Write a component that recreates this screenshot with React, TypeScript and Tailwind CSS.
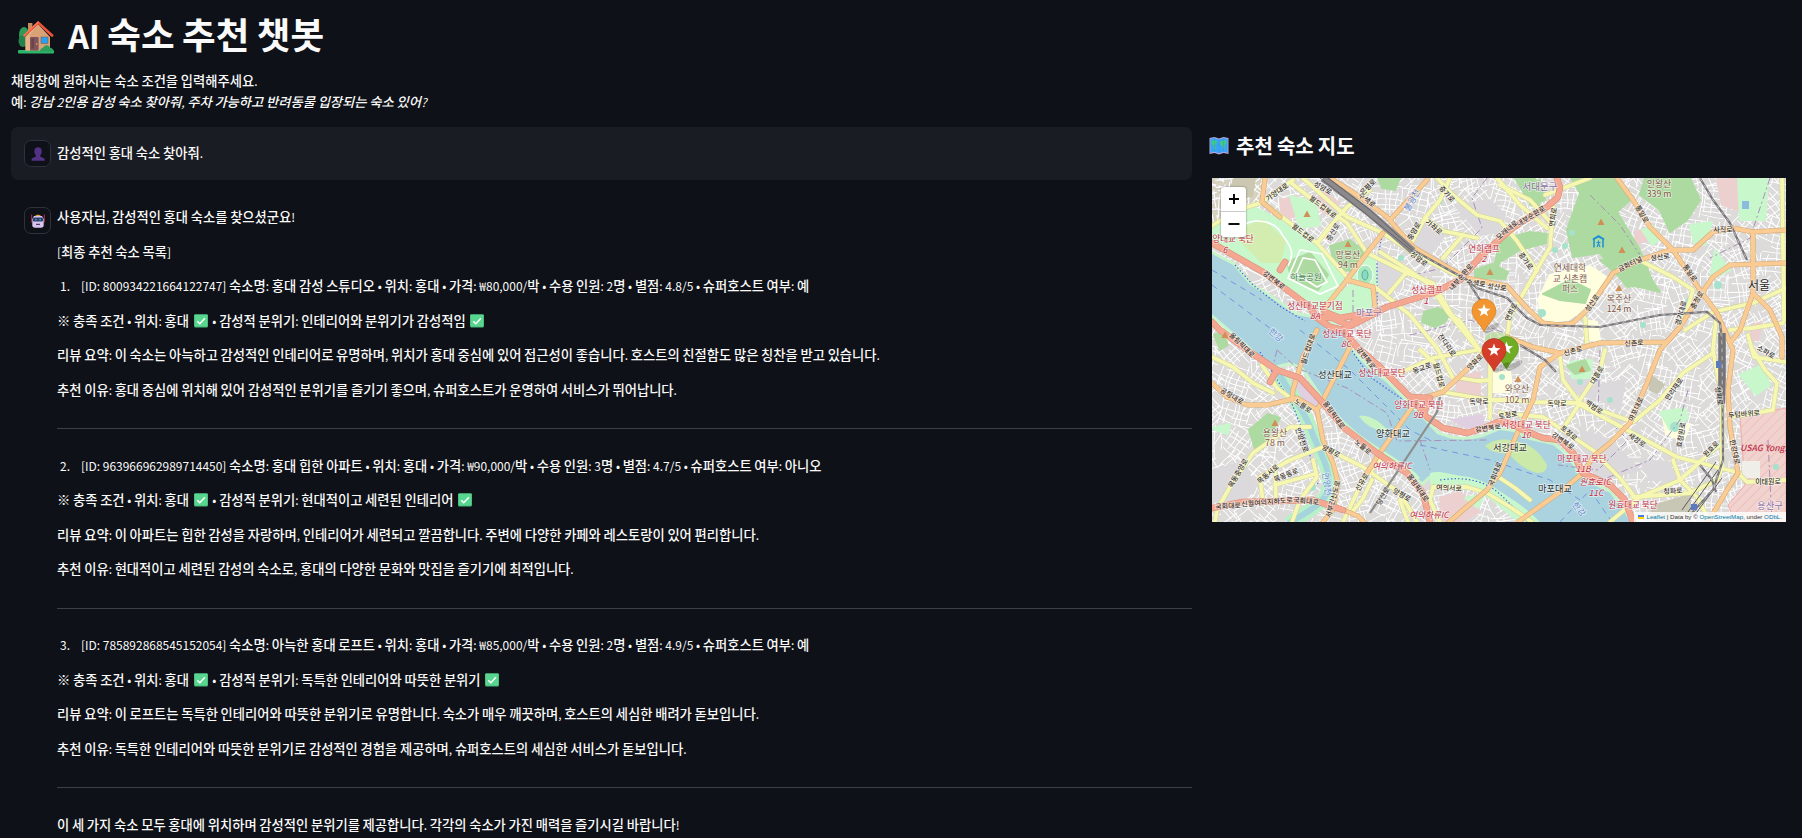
import React from "react";

const FONT = "font-['Noto_Sans_CJK_KR','Noto_Sans',sans-serif]";

/* Latin glyphs, digits and spaces are set a little smaller and lighter than Hangul. */
function T({ children, heading }: { children: string; heading?: boolean }) {
  const parts = children.split(/([\u3131-\uD79D※]+)/).filter(Boolean);
  return (
    <>
      {parts.map((p, i) =>
        /[\u3131-\uD79D※]/.test(p) ? (
          p
        ) : (
          <span key={i} className={heading ? "text-[0.896em]" : "text-[0.9em] font-normal"}>
            {p.split(/(✅)/).map((q, j) => (q === "✅" ? <Check key={j} /> : q))}
          </span>
        ),
      )}
    </>
  );
}

function Check() {
  return (
    <svg viewBox="0 0 14 14" className="mx-[2px] inline-block size-[14px] align-[-2px]" aria-hidden="true">
      <rect x="0.3" y="0.4" width="13.4" height="13.2" rx="0.8" fill="#43b877" />
      <rect x="0.3" y="0.4" width="13.4" height="12.2" rx="0.8" fill="#58d68f" />
      <path d="M3.2 7.2 5.8 9.7 10.9 4.2" fill="none" stroke="#fff" strokeWidth="1.5" />
    </svg>
  );
}

function House() {
  return (
    <svg viewBox="0 0 36 33" className="h-[33px] w-9" aria-hidden="true">
      <ellipse cx="6" cy="14" rx="5" ry="8" fill="#2f9a5a" />
      <ellipse cx="5" cy="20" rx="4.5" ry="6" fill="#25824c" />
      <rect x="0" y="29" width="36" height="3.4" rx="1" fill="#2cb56b" />
      <rect x="10" y="2" width="4.4" height="10" fill="#c78b62" />
      <path d="M20 3 7.500 16v13.5H32V16z" fill="#d9a276" />
      <path d="M20 3 7.500 16v13.5h4.500V14z" fill="#e7b287" />
      <path d="M20.300 0 5 14.400l1.500 1.700L20.300 3.300l13.700 13 1.800-2z" fill="#f0533a" />
      <path d="M20.300 0 5 14.400l.8.900L20.300 1.800z" fill="#ff7d55" />
      <rect x="12" y="16" width="8.6" height="13.5" rx="1" fill="#80545a" />
      <rect x="13.4" y="17.5" width="2.6" height="10" fill="#6d444c" />
      <circle cx="18.8" cy="23" r="0.8" fill="#f3c14f" />
      <rect x="23" y="16" width="7" height="6.6" fill="#2b9df2" stroke="#77593f" strokeWidth="0.5" />
      <path d="M22 30.500c0-3.500 3-3.500 3.600-4.500 2-3 6-1.500 6.400.8 2.500 0 3.500 2.200 3.500 3.700z" fill="#2f9d5b" />
    </svg>
  );
}

function MapEmoji() {
  return (
    <svg viewBox="0 0 20 18" className="h-[18px] w-5" aria-hidden="true">
      <path d="M0.500 1 5.500 0 10 1.500 14.500 0 19.500 1v16l-5-1-4.500 1.500L5.500 16l-5 1z" fill="#b9a6dc" />
      <path d="M1.300 1.700 5.500 1 10 2.400 14.500 1l4.200.700v14l-4.200-1L10 16.200 5.500 14.700l-4.200 1z" fill="#39a4f5" />
      <path d="M2.500 4c2-1.500 4-1.500 5.500.5L7 7.500 5.500 8l1.500 3-1.500 2.500L4.500 9l-2-2z" fill="#41c98a" />
      <path d="M11 5c1.500-2 4.500-2 6.500-1.500v3l-2 1.500.5 3-1.500 1.500-1-3.500-2.500-1z" fill="#41c98a" />
      <path d="M5.500 1v13.700M10 2.400v13.800M14.500 1v13.700" stroke="#2b70bd" strokeOpacity="0.200" />
    </svg>
  );
}

function UserIcon() {
  return (
    <svg viewBox="0 0 14 14" className="size-[14px]" aria-hidden="true">
      <path d="M7 0.300c2.500 0 3.700 1.600 3.700 4 0 2-.7 3.300-1.500 4.200v1l3.800 1.700c.6.4.7 1.200.7 2.500H.5c0-1.300.1-2.100.7-2.500L5 9.500v-1C4.100 7.600 3.400 6.300 3.400 4.300c0-2.400 1.200-4 3.600-4z" fill="#533285" />
    </svg>
  );
}

function RobotIcon() {
  return (
    <svg viewBox="0 0 14 14" className="size-[14px]" aria-hidden="true">
      <path d="M0.700 0.500v8M13.300 0.500v8" stroke="#c9355c" strokeWidth="0.900" />
      <path d="M4 2.500C4 .2 10 .2 10 2.500z" fill="#e0a030" />
      <path d="M3 2h8L12.700 5v6.200c0 1.600-1 2.500-2.700 2.500H4c-1.700 0-2.700-.9-2.700-2.500V5z" fill="#d9c3ee" />
      <rect x="2" y="3.600" width="10" height="4" rx="1.300" fill="#2a3f66" />
      <circle cx="4.900" cy="5.600" r="0.900" fill="#3d9bd8" />
      <circle cx="9.100" cy="5.600" r="0.900" fill="#3d9bd8" />
      <rect x="5" y="9.700" width="4" height="1.200" rx="0.400" fill="#4a3c60" />
    </svg>
  );
}

function Avatar({ children }: { children: React.ReactNode }) {
  return (
    <div className="flex size-[27px] shrink-0 items-center justify-center rounded-[7px] border border-[#30323b] bg-[#0e1117]">
      {children}
    </div>
  );
}

/* ------------------------------- map ------------------------------- */

/* Irregular street grids for the residential blocks. */
function streets(): string {
  let s = 91;
  const rnd = () => ((s = (s * 16807) % 2147483647) / 2147483647);
  let d = "";
  for (let cx = 1205; cx < 1800; cx += 30) {
    for (let cy = 172; cy < 540; cy += 30) {
      const a = (rnd() - 0.5) * 1.7;
      const c = Math.cos(a);
      const n = Math.sin(a);
      for (let dir = 0; dir < 2; dir++) {
        for (let k = -15; k <= 15; k += 4 + rnd() * 4) {
          const l0 = -6 - rnd() * 14;
          const l1 = 6 + rnd() * 14;
          const bend = (rnd() - 0.5) * 5;
          const pt = (u: number, v: number) => {
            const x = dir ? v : u;
            const y = dir ? u : v;
            return `${(cx + x * c - y * n).toFixed(1)} ${(cy + x * n + y * c).toFixed(1)}`;
          };
          d += `M${pt(l0, k)}L${pt(0, k + bend)}L${pt(l1, k + bend / 2)}`;
        }
      }
    }
  }
  return d;
}
const STREETS = streets();

const RIVER =
  "1212,254 1233,265 1250,285 1277,302 1295,315 1320,319 1342,330 1350,350 1367,367 1387,383 1407,403 1424,420 1437,434 1452,439 1467,440 1483,437 1500,430 1513,432 1530,440 1553,445 1568,457 1578,475 1592,484 1610,493 1623,510 1630,522 1537,522 1530,513 1513,503 1490,488 1463,480 1430,475 1422,482 1412,474 1400,463 1373,447 1343,420 1323,397 1303,367 1290,362 1273,366 1257,353 1233,332 1212,314";

const RED = [
  "1212,243 1233,255 1263,272 1283,287 1310,307 1316,317 1330,327 1343,330 1357,347 1380,367 1410,397 1427,417 1443,428 1467,433 1487,427 1500,421 1510,423 1523,430 1543,438 1560,440 1573,453 1583,473 1610,485 1625,500 1633,522",
  "1316,317 1333,318 1350,326 1360,321 1387,307 1433,293 1460,280 1480,257 1510,230 1520,223 1547,207 1558,197 1560,188 1557,178",
  "1212,322 1220,330 1247,350 1277,370 1300,378 1323,403 1343,427 1377,453 1407,473 1423,493 1430,522",
  "1212,508 1243,502 1313,500 1343,510",
  "1280,270 1285,262",
  "1343,330 1352,323 1363,314 1340,318 1325,312",
  "1277,370 1270,382",
  "1410,397 1430,398 1424,412",
];
const ORANGE = [
  "1317,330 1303,357 1293,390 1292,400",
  "1350,347 1323,400 1317,410",
  "1212,383 1227,397 1247,405 1267,405 1297,398 1317,410 1323,440 1333,463 1338,483 1333,510 1323,522",
  "1343,510 1358,516 1366,524",
  "1330,178 1360,197 1387,217 1413,247 1447,267 1467,278 1507,286 1527,308 1543,323 1560,325 1573,323 1590,307 1613,273 1640,260 1670,250 1693,250 1713,232 1733,228 1753,232 1786,230",
  "1265,178 1262,202 1280,217",
  "1617,178 1633,200 1650,227 1673,250 1700,290 1717,313 1730,343 1733,350 1728,390 1730,427 1738,473 1727,490 1707,524",
  "1753,232 1753,293 1740,330 1730,343",
  "1753,293 1770,310 1782,337 1782,357",
  "1786,263 1730,265 1713,277 1697,300 1680,327 1660,350 1647,383 1630,423 1610,443 1593,457 1583,473 1560,492 1518,522",
  "1507,337 1533,347 1560,353 1600,343 1667,342 1680,327",
  "1487,348 1480,357 1463,373 1443,392 1417,400 1377,457 1367,473",
  "1560,353 1540,367 1533,400 1520,427 1500,473 1487,490 1463,510 1447,524",
  "1427,180 1390,220",
  "1383,233 1367,253 1347,280 1323,310",
  "1347,280 1373,287 1375,307",
];
const YELLOW = [
  "1212,226 1235,211 1260,203 1293,180",
  "1262,202 1290,223 1317,243 1347,277",
  "1290,182 1313,200 1347,223 1367,253 1407,273 1433,283 1453,317 1460,321 1483,355",
  "1303,178 1347,217 1383,233 1413,253 1460,277",
  "1317,243 1333,223 1347,207 1370,190",
  "1437,178 1453,195 1477,215 1500,221 1517,241 1537,271",
  "1497,178 1520,205 1547,228",
  "1553,207 1550,247 1527,287 1510,317 1507,337",
  "1380,252 1410,271 1430,285 1447,311 1477,348",
  "1375,287 1410,315 1437,348 1453,378",
  "1425,218 1443,231 1477,238",
  "1463,235 1443,258",
  "1425,218 1412,242",
  "1450,178 1440,200 1425,218",
  "1389,293 1407,272",
  "1400,373 1433,358 1477,350",
  "1420,350 1437,365 1443,392 1490,400 1510,400 1533,402 1577,403 1627,430 1677,457 1740,473",
  "1560,357 1563,380 1580,403 1633,422 1660,400 1683,373 1713,353",
  "1580,400 1600,370 1605,350",
  "1580,403 1570,418 1562,430",
  "1500,413 1543,417 1573,437 1597,453",
  "1490,360 1490,418",
  "1460,378 1478,381 1490,380",
  "1720,445 1713,450 1680,480 1640,497 1610,522",
  "1597,455 1620,478 1633,495",
  "1633,497 1690,493 1717,480 1722,467 1722,400 1713,350 1716,320",
  "1673,460 1680,480 1697,497 1710,522",
  "1730,417 1773,410 1777,383 1765,370 1753,350",
  "1740,475 1747,482 1786,480",
  "1782,178 1784,320",
  "1685,330 1713,312 1753,303 1786,288",
  "1730,330 1752,328 1783,323",
  "1748,335 1754,357 1786,362",
  "1643,262 1673,277 1693,290 1687,310 1678,330",
  "1500,185 1530,200 1553,225",
  "1545,195 1590,178",
  "1212,357 1233,367 1253,383 1273,393",
  "1262,365 1277,388 1297,403",
  "1323,447 1290,460 1260,477 1263,503",
  "1215,522 1217,510 1230,487 1253,453 1290,427 1310,427",
  "1323,447 1363,467 1400,493 1417,522",
  "1380,460 1363,480 1343,522",
  "1372,480 1362,500 1352,512",
  "1313,460 1317,477 1300,500 1292,522",
  "1275,470 1276,500",
  "1275,485 1315,474",
  "1433,487 1467,487 1487,493 1510,507 1532,522",
  "1433,487 1430,500 1440,522",
  "1400,500 1408,522",
  "1585,318 1587,343",
  "1500,478 1515,488 1530,500",
];
const RAIL = [
  "1413,250 1467,280 1477,288 1507,298 1527,318 1540,325 1600,327 1660,315 1707,312 1720,323 1722,345 1723,460 1713,490 1690,515",
  "1700,178 1713,200 1730,223 1747,260",
  "1467,280 1480,300 1487,310",
  "1520,345 1545,360 1556,372",
  "1700,465 1712,480 1716,492",
];
const FOREST = [
  "1571,178 1617,178 1630,200 1617,212 1640,250 1653,283 1627,287 1600,253 1573,257 1567,230 1580,193",
  "1645,178 1690,178 1700,200 1687,220 1670,232 1660,210 1640,195",
  "1600,260 1640,262 1660,292 1652,290 1630,285",
  "1543,294 1570,280 1590,290 1585,303 1560,300",
  "1500,240 1530,232 1547,234 1546,243 1520,250 1500,262 1492,275",
  "1475,270 1492,264 1508,272 1505,279 1475,278",
  "1424,312 1437,308 1450,313 1445,322 1435,327 1422,322",
  "1330,246 1350,240 1367,254 1355,272 1345,270 1334,262",
  "1287,262 1310,253 1328,275 1318,290 1292,280",
  "1249,430 1268,414 1280,418 1268,438 1256,452",
  "1567,366 1585,360 1590,370 1575,374",
  "1526,183 1540,180 1545,200 1530,205",
  "1214,335 1222,332 1228,345 1220,350",
  "1378,178 1400,178 1395,190 1382,188",
  "1515,178 1535,178 1540,210 1528,200",
];
const GRASS = [
  "1212,226 1250,205 1290,225 1317,245 1345,277 1322,310 1300,298 1270,278 1212,240",
  "1290,196 1315,202 1320,225 1300,228",
  "1357,262 1375,255 1377,285 1350,280",
  "1325,308 1350,285 1372,290 1370,308 1345,320",
  "1738,178 1768,178 1765,220 1740,220",
  "1642,230 1653,226 1662,238 1652,245",
  "1660,412 1685,408 1688,418 1670,430",
  "1570,362 1592,360 1590,378 1572,378",
  "1690,225 1712,222 1705,245 1694,243",
  "1715,250 1730,270 1710,280",
  "1212,428 1230,424 1228,434 1216,430",
  "1500,482 1530,505 1545,522 1520,522",
  "1465,498 1485,494 1478,508",
  "1740,375 1762,365 1770,385 1756,395",
];
const SAND = [
  "1550,275 1590,266 1608,278 1590,305 1568,320 1545,322 1538,300",
  "1490,372 1510,372 1512,392 1492,392",
  "1584,320 1597,322 1600,340 1586,340",
  "1663,418 1672,430 1690,424 1684,440 1666,434",
];
const GREY = [
  "1402,240 1420,225 1445,235 1430,255 1445,262 1460,275 1430,262",
  "1378,255 1402,262 1388,300 1378,300",
  "1455,205 1490,200 1505,215 1500,232 1480,235",
  "1600,385 1625,380 1620,410 1600,400",
  "1212,470 1245,462 1255,490 1240,500 1212,502",
  "1560,375 1600,380 1595,400 1575,392",
  "1580,430 1610,440 1640,470 1600,480 1590,468",
  "1640,460 1668,462 1678,480 1650,480",
  "1350,380 1390,392 1400,410 1380,400",
];
const PINK = [
  "1280,200 1298,196 1300,215 1282,220",
  "1325,192 1340,204 1325,214 1312,200",
  "1455,378 1480,372 1480,395 1458,392",
  "1440,498 1460,492 1480,512 1460,522 1442,522",
  "1635,232 1648,228 1648,240 1636,244",
  "1717,180 1738,178 1738,210 1722,205",
  "1752,325 1762,322 1758,340 1750,340",
  "1295,376 1318,400 1300,396 1280,385",
];

/* [text, x, y, rotation] */
type L = [string, number, number, number];
const ROADS: L[] = [
  ["가양대로", 1277, 192, -35], ["월드컵북로", 1323, 207, 38], ["월드컵로", 1303, 233, 38], ["증산로", 1333, 232, -60],
  ["성암로", 1323, 188, 30], ["수색로", 1367, 200, 38], ["은평로", 1368, 187, -45], ["증가로", 1447, 194, 48],
  ["가좌로", 1434, 227, 40], ["중암로", 1414, 231, -60], ["성암로", 1419, 259, 38], ["강변북로", 1274, 280, 38],
  ["내부순환로", 1461, 277, -50], ["내부순환로", 1531, 216, -32], ["모래내로", 1507, 230, -40], ["수색로", 1476, 283, 8],
  ["성산로", 1497, 287, 8], ["연희로", 1553, 217, -82], ["증가로", 1526, 261, 55], ["통일로", 1642, 214, 60],
  ["금화터널", 1630, 264, -25], ["성산로", 1660, 257, -8], ["사직로", 1723, 229, 0], ["통일로", 1690, 273, 55],
  ["성산로", 1592, 303, -55], ["충정로", 1697, 300, -60], ["경기대로", 1681, 313, -75], ["신촌로", 1634, 343, -3],
  ["신촌로", 1573, 351, -15], ["연희로", 1511, 312, -65], ["소파로", 1766, 352, 30],
  ["잔다리로", 1447, 345, 55], ["동교로", 1422, 368, -20], ["월드컵로", 1439, 375, 75], ["양화로", 1475, 362, -45],
  ["독막로", 1479, 401, 0], ["토정로", 1508, 415, -10], ["독막로", 1557, 403, 0], ["백범로", 1594, 407, 35],
  ["대흥로", 1597, 375, -60], ["마포대로", 1636, 409, -65], ["만리재로", 1674, 389, -55], ["새창로", 1637, 440, 35],
  ["효창원로", 1681, 435, -80], ["원효로", 1711, 449, -45], ["두텁바위로", 1744, 414, -5], ["한강대로", 1735, 452, 78],
  ["이태원로", 1768, 481, 0], ["청파로", 1673, 491, -3], ["청파로", 1719, 396, 80], ["토정로", 1569, 433, 40],
  ["강변북로", 1488, 428, -8], ["강변북로", 1563, 441, 35], ["강변북로", 1366, 358, 52], ["올림픽대로", 1242, 345, 45],
  ["월드컵대로", 1308, 349, -72], ["공항대로", 1232, 396, 30], ["올림픽대로", 1334, 415, 55], ["노들로", 1363, 447, 40],
  ["노들로", 1303, 406, 35], ["양평로", 1331, 451, 28], ["안양천로", 1302, 440, 70], ["목동서로", 1268, 474, -40],
  ["목동동로", 1286, 475, -22], ["목동중앙로", 1238, 473, -60], ["국회대로", 1228, 506, -3], ["신월여의지하도로", 1267, 502, -5],
  ["국회대로", 1306, 501, 6], ["서부간선도로", 1333, 499, -75], ["선유로", 1362, 482, -60], ["당산로", 1383, 496, -60],
  ["양평로", 1402, 495, 30], ["올림픽대로", 1418, 488, 55], ["여의서로", 1449, 488, 3], ["국회대로", 1495, 474, -68],
];
const RED_LABELS: L[] = [
  ["양대교 북단", 1233, 239, 0], ["성산대교분기점", 1315, 306, 0], ["성산램프", 1427, 290, 0], ["연희램프", 1484, 249, 0],
  ["성산대교 북단", 1347, 334, 0], ["성산대교북단", 1382, 373, 0], ["양화대교 북단", 1419, 405, 0],
  ["서강대교 북단", 1526, 425, 0], ["마포대교 북단", 1582, 459, 0], ["원효대교 북단", 1633, 505, 0],
];
const RED_NUM: L[] = [
  ["6", 1225, 250, 0], ["8A", 1315, 316, 0], ["1", 1426, 301, 0], ["2", 1484, 259, 0], ["8C", 1346, 344, 0], ["9B", 1418, 415, 0],
  ["10", 1526, 435, 0], ["11B", 1583, 469, 0], ["11C", 1596, 493, 0], ["여의하류IC", 1392, 466, 0], ["여의하류IC", 1429, 515, 0],
  ["원효로IC", 1595, 482, 0],
];
const BROWN: L[] = [
  ["망봉산", 1348, 255, 0], ["94 m", 1348, 265, 0], ["인왕산", 1659, 184, 0], ["339 m", 1659, 194, 0], ["복주산", 1619, 299, 0],
  ["124 m", 1619, 309, 0], ["와우산", 1517, 389, 0], ["102 m", 1517, 400, 0], ["용왕산", 1275, 433, 0], ["78 m", 1275, 443, 0],
  ["연세대학", 1570, 268, 0], ["교 신촌캠", 1570, 279, 0], ["퍼스", 1570, 289, 0],
];
const BRIDGES: L[] = [
  ["성산대교", 1335, 375, 0], ["양화대교", 1393, 434, 0], ["서강대교", 1510, 448, 0], ["마포대교", 1555, 489, 0],
];
const PEAKS = [
  [1307, 214], [1348, 244], [1490, 272], [1601, 222], [1622, 250], [1619, 288], [1518, 379], [1275, 423], [1225, 335], [1582, 369],
];

function Labels({ items, size, fill, extra }: { items: L[]; size: number; fill: string; extra?: string }) {
  return (
    <g fontSize={size} fill={fill} stroke="#fff" strokeOpacity="0.600" strokeWidth="1.500" paintOrder="stroke" textAnchor="middle" className={extra}>
      {items.map(([t, x, y, r], i) => (
        <text key={i} transform={`translate(${x} ${y}) rotate(${r})`} y={size * 0.36}>
          {t}
        </text>
      ))}
    </g>
  );
}

function Lines({ items, color, casing, w }: { items: string[]; color: string; casing: string; w: number }) {
  return (
    <g fill="none" strokeLinejoin="round" strokeLinecap="round">
      {items.map((p, i) => (
        <polyline key={`c${i}`} points={p} stroke={casing} strokeWidth={w + 1.1} />
      ))}
      {items.map((p, i) => (
        <polyline key={i} points={p} stroke={color} strokeWidth={w} />
      ))}
    </g>
  );
}

function Areas({ items, fill, stroke }: { items: string[]; fill: string; stroke?: string }) {
  return (
    <g fill={fill} stroke={stroke ?? fill} strokeWidth="2" strokeLinejoin="round">
      {items.map((p, i) => (
        <polygon key={i} points={p} />
      ))}
    </g>
  );
}

function Pin({ x, y, color, dark }: { x: number; y: number; color: string; dark: string }) {
  return (
    <g transform={`translate(${x} ${y})`}>
      <ellipse cx="8" cy="-4" rx="9" ry="3" transform="rotate(-30 8 -4)" fill="#000" opacity="0.200" />
      <path d="M0 0C-3-8-12-13-12-21a12 12 0 0 1 24 0C12-13 3-8 0 0z" fill={color} stroke={dark} strokeWidth="0.600" />
      <path d="M0-28l1.700 4.500 4.800.200-3.800 3 1.300 4.600L0-18.400l-4 2.700 1.300-4.600-3.800-3 4.800-.200z" fill="#fff" />
    </g>
  );
}

function SeoulMap() {
  return (
    <svg viewBox="1212 178 574 344" className="block h-[344px] w-[574px] font-normal" role="img">
      <defs>
        <pattern id="hatch" width="7" height="7" patternUnits="userSpaceOnUse" patternTransform="rotate(45)">
          <rect width="7" height="7" fill="#f0d3ce" />
          <path d="M0 0v7" stroke="#f1b9b4" strokeWidth="1.500" />
        </pattern>
      </defs>
      <rect x="1212" y="178" width="574" height="344" fill="#dddbda" />
      <Areas items={["1212,178 1262,178 1258,200 1225,212 1212,222"]} fill="#d6d2bd" />
      <g fill="none">
        <path d={STREETS} stroke="#cfcdcd" strokeWidth="1.700" />
        <path d={STREETS} stroke="#fdfdfd" strokeWidth="1.200" />
      </g>
      <Areas items={GREY} fill="#dbd9db" />
      <Areas items={SAND} fill="#ffffe0" />
      <Areas items={PINK} fill="#ecd0d0" />
      <Areas items={["1225,200 1235,178 1255,178 1252,196"]} fill="#cbc7b0" />
      <Areas items={["1650,375 1664,385 1657,393 1650,390", "1655,505 1690,495 1690,515 1670,522 1648,518"]} fill="#c8c7b5" />
      <Areas items={["1452,420 1482,415 1484,426 1466,428", "1295,378 1322,402 1310,408 1285,390"]} fill="#e0cfe0" />
      <Areas items={GRASS} fill="#c8f7cc" />
      <Areas items={FOREST} fill="#addaa0" />
      <Areas items={["1245,228 1262,220 1285,240 1280,262 1262,262 1240,240"]} fill="#d3edb0" />
      <path d="M1240 228C1252 216 1276 220 1283 236c8 10 12 18 5 30M1288 278l12-28 22 4 16 32-18 8z M1296 274l7-16 12 2 12 22-10 5z" fill="none" stroke="#fff" strokeWidth="1.600" />
      <ellipse cx="1365" cy="275" rx="8" ry="10" fill="#a8e8bd" stroke="#fff" />
      <ellipse cx="1365" cy="275" rx="3" ry="5" fill="#8bd9c2" stroke="#3c9a90" strokeWidth="0.700" />
      <polygon points="1740,417 1786,408 1786,522 1735,522 1728,505 1745,485" fill="url(#hatch)" stroke="#f3a9a4" />
      <rect x="1742" y="461" width="18" height="17" fill="#f0eee8" />
      <rect x="1742" y="201" width="7" height="8" fill="#8bbbe0" />
      <g fill="#a5e2cc">
        <circle cx="1572" cy="233" r="3" /><circle cx="1565" cy="246" r="3" /><circle cx="1542" cy="313" r="4" />
        <circle cx="1675" cy="427" r="5" /><circle cx="1580" cy="382" r="3" /><circle cx="1718" cy="285" r="4" />
        <circle cx="1688" cy="301" r="3" /><circle cx="1440" cy="201" r="3" /><circle cx="1401" cy="258" r="3" />
        <circle cx="1312" cy="487" r="4" /><circle cx="1555" cy="250" r="3" /><circle cx="1610" cy="400" r="3" />
        <circle cx="1502" cy="377" r="3" /><circle cx="1776" cy="467" r="3" /><circle cx="1643" cy="325" r="3" />
      </g>
      <path d="M1278 372c12 22 25 36 32 55 7 22 22 40 18 62-2 14-20 22-40 35" fill="none" stroke="#b8f0c8" strokeWidth="14" />
      <path d="M1278 372c12 22 25 36 32 55 7 22 22 40 18 62-2 14-20 22-40 35" fill="none" stroke="#a5d4dc" strokeWidth="6" />
      <polygon points={RIVER} fill="#aad3df" stroke="#c8f4cc" strokeWidth="6" strokeLinejoin="round" />
      <polygon points={RIVER} fill="#aad3df" />
      <path d="M1430 473c10-3 18 1 32 3 20 2 34 12 48 22 12 7 22 16 30 24h-22c-16-12-26-24-40-30-20-6-34 0-48-6z" fill="#c8f7cc" />
      <path d="M1342 420c15 14 34 26 50 36 12 8 22 14 28 22l-6 4c-20-18-50-34-74-56z" fill="#c8f7cc" />
      <path d="M1485 446c9-7 18-8 30-5 15 3 24 10 32 24 0 8-8 10-16 6-9-4-16-10-22-17-9-1-19-2-24-8z" fill="#cbe9a8" />
      <path d="M1359 416c10-2 23 6 31 17-10-1-24-6-31-17z" fill="#c8f4c4" />
      <g fill="none" stroke="#6f8de0" strokeWidth="0.900" strokeDasharray="6 5">
        <path d="M1212 285l40 30 30 22M1212 270l50 30M1300 330l50 40 60 60 20 10" />
        <path d="M1420 445l70 15 60 20 30 20M1560 522l30-32 22 32" />
      </g>
      <g fill="none" stroke="#3d62df" strokeWidth="1.200" strokeDasharray="1.400 2.200">
        <path d="M1235 265l18 20 28 22 24 14M1348 345l22 32 32 22" />
        <path d="M1440 480q40-6 62 16l26 26M1260 352l16 26 16 26 12 30 14 50M1382 235l-5 28v45" />
      </g>
      <g fill="none" stroke="#a88fb8" strokeWidth="1" strokeDasharray="7 3 2 3">
        <path d="M1277 350l20 18 50 20 40 25 10 28 90-1M1277 350l-5 20M1420 440l10 30M1487 178l-15 20 10 30-40 40-40 10M1590 195l30 30 20 30M1600 350l-2 60 30 30-30 30-40-5M1688 390l-8 30-30 40-60 25M1770 178l-20 60-40 20M1768 440l4 82M1353 290v30M1410 335l60-15 40 15" />
      </g>
      <Lines items={YELLOW} color="#f6f7b0" casing="#d2d29c" w={3.8} />
      <Lines items={ORANGE} color="#fbcb94" casing="#d0a874" w={4} />
      <Lines items={RED} color="#f4a891" casing="#d98b78" w={5.4} />
      <g fill="none">
        <path d="M1323 178l44 33 46 40" stroke="#8b898c" strokeWidth="7.500" />
        <path d="M1320 178l46 36 50 40M1328 178l42 32 46 42" stroke="#5c5a5c" strokeWidth="0.800" />
        <path d="M1722 333v46l-1 25" stroke="#8f8d90" strokeWidth="8" />
        <path d="M1720 333v70M1724 333v70M1718 470l-30 42M1722 478l-28 38M1716 462l-34 48" stroke="#5c5a5c" strokeWidth="1" />
        <path d="M1440 397l-3 15-8 12-59 89" stroke="#8d8d8d" strokeWidth="2.200" />
      </g>
      <g fill="none" stroke="#777578" strokeWidth="2.200">
        {RAIL.map((p, i) => (
          <polyline key={i} points={p} />
        ))}
      </g>
      <g fill="none" stroke="#d8d6d8" strokeDasharray="4 4" strokeWidth="0.700">
        {RAIL.map((p, i) => (
          <polyline key={i} points={p} />
        ))}
      </g>
      <g fill="#5b7ac0"><rect x="1716" y="361" width="5" height="7" /><rect x="1691" y="504" width="6" height="6" /></g>
      <g fill="#d08f55">
        {PEAKS.map(([x, y], i) => (
          <path key={i} d={`M${x} ${y - 3.5}l3.500 6.500h-7z`} />
        ))}
      </g>
      <path d="M1594 247.500v-8.500l4.500-2.500 4.500 2.500v8.500M1592.800 239.500l5.700-3.500 5.700 3.500" fill="none" stroke="#1b8fd8" strokeWidth="1.500" />
      <path d="M1598.500 240.500v3l-1.500 3.500M1598.500 243.500l1.500 3.500M1596.500 242.500h4" fill="none" stroke="#1b8fd8" strokeWidth="1.100" />
      <Labels items={ROADS} size={7} fill="#3b352c" extra="font-medium" />
      <Labels items={[["하늘공원", 1306, 277, 0]]} size={8.5} fill="#3e7f50" />
      <Labels items={[["서대문구", 1540, 187, 0], ["마포구", 1369, 313, 0], ["용산구", 1770, 506, 0]]} size={9.5} fill="#8f6fa3" />
      <Labels items={[["한강", 1276, 335, 40], ["안양천", 1327, 484, 82], ["한강", 1579, 509, 50], ["불광천", 1412, 200, -60]]} size={8.5} fill="#5f86cc" />
      <Labels items={BROWN} size={8.8} fill="#80593f" />
      <Labels items={BRIDGES} size={9.2} fill="#2b2b2b" />
      <Labels items={RED_LABELS} size={8.6} fill="#bf2d46" />
      <Labels items={RED_NUM} size={8.6} fill="#bf2d46" extra="italic" />
      <text x="1740" y="450.500" fontSize="8.600" fill="#bf2d46" className="font-medium italic">USAG Yongs</text>
      <Labels items={[["서울", 1759, 286, 0]]} size={12} fill="#252525" />
      <ellipse cx="1497" cy="339" rx="12" ry="7" fill="#9fdc70" opacity="0.450" />
      <Pin x={1484} y={332} color="#f29631" dark="#d07a1c" />
      <Pin x={1506.5} y={369.500} color="#70ad25" dark="#568a17" />
      <Pin x={1494} y={371.500} color="#d43d2a" dark="#ad2c1d" />
    </svg>
  );
}

/* ------------------------------- page ------------------------------ */

const ITEMS = [
  {
    head: "[ID: 800934221664122747] 숙소명: 홍대 감성 스튜디오 • 위치: 홍대 • 가격: ₩80,000/박 • 수용 인원: 2명 • 별점: 4.8/5 • 슈퍼호스트 여부: 예",
    cond: "※ 충족 조건 • 위치: 홍대 ✅ • 감성적 분위기: 인테리어와 분위기가 감성적임 ✅",
    review: "리뷰 요약: 이 숙소는 아늑하고 감성적인 인테리어로 유명하며, 위치가 홍대 중심에 있어 접근성이 좋습니다. 호스트의 친절함도 많은 칭찬을 받고 있습니다.",
    reason: "추천 이유: 홍대 중심에 위치해 있어 감성적인 분위기를 즐기기 좋으며, 슈퍼호스트가 운영하여 서비스가 뛰어납니다.",
  },
  {
    head: "[ID: 963966962989714450] 숙소명: 홍대 힙한 아파트 • 위치: 홍대 • 가격: ₩90,000/박 • 수용 인원: 3명 • 별점: 4.7/5 • 슈퍼호스트 여부: 아니오",
    cond: "※ 충족 조건 • 위치: 홍대 ✅ • 감성적 분위기: 현대적이고 세련된 인테리어 ✅",
    review: "리뷰 요약: 이 아파트는 힙한 감성을 자랑하며, 인테리어가 세련되고 깔끔합니다. 주변에 다양한 카페와 레스토랑이 있어 편리합니다.",
    reason: "추천 이유: 현대적이고 세련된 감성의 숙소로, 홍대의 다양한 문화와 맛집을 즐기기에 최적입니다.",
  },
  {
    head: "[ID: 785892868545152054] 숙소명: 아늑한 홍대 로프트 • 위치: 홍대 • 가격: ₩85,000/박 • 수용 인원: 2명 • 별점: 4.9/5 • 슈퍼호스트 여부: 예",
    cond: "※ 충족 조건 • 위치: 홍대 ✅ • 감성적 분위기: 독특한 인테리어와 따뜻한 분위기 ✅",
    review: "리뷰 요약: 이 로프트는 독특한 인테리어와 따뜻한 분위기로 유명합니다. 숙소가 매우 깨끗하며, 호스트의 세심한 배려가 돋보입니다.",
    reason: "추천 이유: 독특한 인테리어와 따뜻한 분위기로 감성적인 경험을 제공하며, 슈퍼호스트의 세심한 서비스가 돋보입니다.",
  },
];

function P({ children }: { children: string }) {
  return (
    <p className="mb-[13.3px] h-[21.25px] whitespace-nowrap">
      <T>{children}</T>
    </p>
  );
}

export default function App() {
  return (
    <div className={`h-[838px] w-[1802px] overflow-hidden bg-[#0e1117] pl-[11px] text-[13.3px] leading-[21.25px] font-medium text-[#fafafa] ${FONT}`}>
      <header className="h-[127px]">
        <div className="flex h-[70px] items-center pl-[7px]">
          <div className="flex gap-[14px]">
            <div className="pt-[8px]"><House /></div>
            <h1 className="-mt-px text-[36.6px] leading-[44px] font-bold whitespace-nowrap">
              <T heading>AI 숙소 추천 챗봇</T>
            </h1>
          </div>
        </div>
        <p><T>채팅창에 원하시는 숙소 조건을 입력해주세요.</T></p>
        <p>
          <T>예: </T>
          <em><T>강남 2인용 감성 숙소 찾아줘, 주차 가능하고 반려동물 입장되는 숙소 있어?</T></em>
        </p>
      </header>
      <div className="flex">
        <main className="w-[1181px]">
          <div className="flex h-[53px] gap-[6px] rounded-[7px] bg-[#1a1c23] p-[13px]">
            <Avatar><UserIcon /></Avatar>
            <p className="pt-[2px]"><T>감성적인 홍대 숙소 찾아줘.</T></p>
          </div>
          <div className="mt-[14px] flex gap-[6px] pt-[13px] pl-[13px]">
            <Avatar><RobotIcon /></Avatar>
            <div className="min-w-0 flex-1">
              <div className="-mt-[1px]">
                <P>사용자님, 감성적인 홍대 숙소를 찾으셨군요!</P>
                <P>[최종 추천 숙소 목록]</P>
              </div>
              {ITEMS.map((it, i) => (
                <section key={i}>
                  <div className="flex">
                    <span className="w-[13px] text-right"><T>{`${i + 1}.`}</T></span>
                    <div className="ml-[11px]"><P>{it.head}</P></div>
                  </div>
                  <P>{it.cond}</P>
                  <P>{it.review}</P>
                  <P>{it.reason}</P>
                  <hr className="mt-[28.2px] mb-[25.5px] border-0 border-t border-[#3d3f45]" />
                </section>
              ))}
              <P>이 세 가지 숙소 모두 홍대에 위치하며 감성적인 분위기를 제공합니다. 각각의 숙소가 가진 매력을 즐기시길 바랍니다!</P>
            </div>
          </div>
        </main>
        <aside className="ml-[17px] w-[577px]">
          <div className="flex h-[51px] items-center gap-[7px] pb-[14px]">
            <MapEmoji />
            <h3 className="text-[20px] leading-6 font-bold whitespace-nowrap"><T heading>추천 숙소 지도</T></h3>
          </div>
          <div className="relative ml-[3px] h-[344px] w-[574px] overflow-hidden">
            <SeoulMap />
            <div className="absolute top-[9px] left-[9px] flex w-[25px] flex-col rounded-[3px] bg-white shadow-[0_0_2px_rgba(0,0,0,0.500)]">
              {["M-5 0H5M0-5V5", "M-5.500 0H5.500"].map((d, i) => (
                <button key={i} className={i ? "flex h-[25px] items-center justify-center pb-[2px]" : "flex h-[25px] items-center justify-center border-b border-[#ccc]"}>
                  <svg viewBox="-6 -6 12 12" className="size-3"><path d={d} stroke="#000" strokeWidth="1.900" /></svg>
                </button>
              ))}
            </div>
            <div className="absolute right-0 bottom-0 flex h-[10px] items-center bg-white/80 px-[4px] font-['Liberation_Sans',sans-serif] text-[6.200px] leading-[10px] font-normal whitespace-nowrap text-[#333]">
              <svg viewBox="0 0 6 4" className="mr-[2px] h-1 w-[6px]"><path d="M0 0h6v2H0z" fill="#4c7be1" /><path d="M0 2h6v2H0z" fill="#ffd500" /></svg>
              <span className="text-[#0078a8]">Leaflet</span>
              <span className="whitespace-pre"> | Data by © </span>
              <span className="text-[#0078a8]">OpenStreetMap</span>
              <span className="whitespace-pre">, under </span>
              <span className="text-[#0078a8]">ODbL.</span>
            </div>
          </div>
        </aside>
      </div>
    </div>
  );
}
